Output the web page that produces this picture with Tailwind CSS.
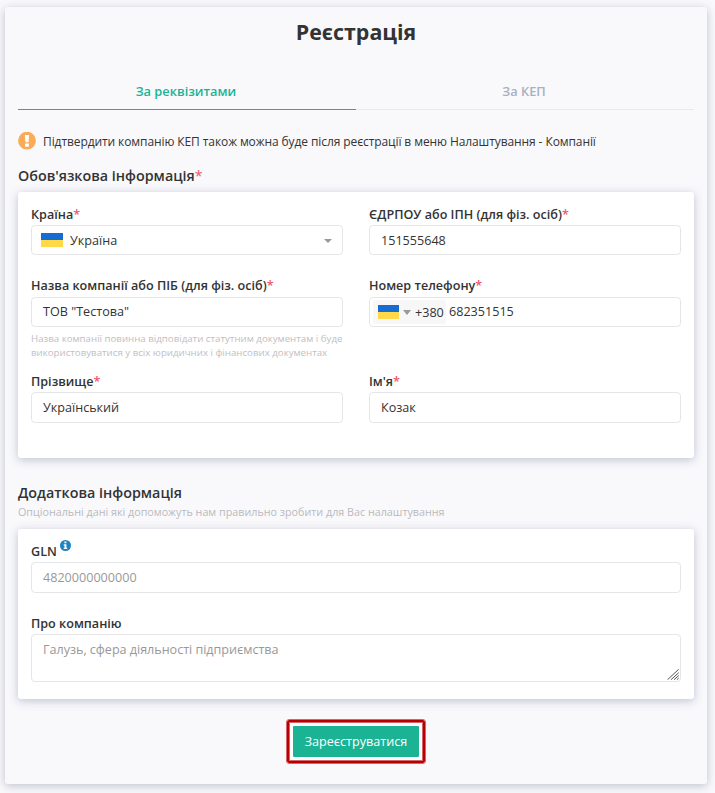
<!DOCTYPE html>
<html lang="uk">
<head>
<meta charset="utf-8">
<title>Реєстрація</title>
<script src="https://cdn.jsdelivr.net/npm/@tailwindcss/browser@4"></script>
</head>
<body class="h-[793px] overflow-hidden bg-[#f9f9fb] pt-[7px] pl-[5px] font-['Open_Sans','Noto_Sans',sans-serif] text-[12.6px] text-[#333]">
<main class="h-[777px] w-[702px] rounded-[3px] bg-[#f9f9fc] px-[13px] shadow-[0_2px_10px_rgba(60,70,110,0.3)]">
  <h1 class="h-[66px] pt-[10px] text-center text-[21.4px] leading-[30px] font-bold">Реєстрація</h1>
  <nav class="flex h-[37px] text-center text-[12.8px] leading-[37px] font-semibold">
    <div class="w-[338px] border-b border-[#1ab394] pr-[2px] text-[#1ab394]">За реквізитами</div>
    <div class="w-[338px] border-b border-[#e7eaec] pr-[2px] text-[#a7b1c2]">За КЕП</div>
  </nav>
  <div class="flex h-[53px] pt-[22px]">
    <svg class="h-[18px] w-[18px] shrink-0" viewBox="0 0 18 18"><circle cx="9" cy="8.7" r="8.9" fill="#f8ac59"/><path d="M6.9 3.1h4.2l-.5 7.1H7.4z" fill="#fff"/><rect x="7.1" y="11.5" width="3.8" height="3.2" rx=".4" fill="#fff"/></svg>
    <p class="ml-[7px] text-[12px] leading-[19px] tracking-[-0.092px] whitespace-nowrap">Підтвердити компанію КЕП також можна буде після реєстрації в меню Налаштування - Компанії</p>
  </div>
  <h2 class="h-[29px] pt-[3px] text-[14.3px] leading-[20px] font-semibold">Обов'язкова інформація<span class="font-normal text-[#ed5565]">*</span></h2>
  <section class="grid h-[266px] grid-cols-[312px_312px] grid-rows-[72px_95px_80px] gap-x-[26px] rounded-[3px] bg-white px-[13px] pt-[13px] shadow-[0_2px_10px_rgba(60,70,110,0.3)]">
    <div>
      <label class="block h-[20px] leading-[20px] font-semibold">Країна<span class="text-[#ed5565]">*</span></label>
      <div class="flex h-[30px] items-center rounded-[4px] border border-[#e5e6e7] pr-[10px] pl-[9px]">
        <svg class="h-[14px] w-[22px]" viewBox="0 0 22 14"><path d="M0 0h22v7H0z" fill="#156dd1"/><path d="M0 7h22v7H0z" fill="#ffd948"/></svg>
        <span class="ml-[7px] flex-1 pt-[2px]">Україна</span>
        <svg class="mt-px h-[4px] w-[8px]" viewBox="0 0 8 4"><path d="M0 0h8L4 4z" fill="#999"/></svg>
      </div>
    </div>
    <div>
      <label class="block h-[20px] leading-[20px] font-semibold">ЄДРПОУ або ІПН (для фіз. осіб)<span class="text-[#ed5565]">*</span></label>
      <div class="flex h-[30px] items-center rounded-[4px] border border-[#e5e6e7] px-[11px] pt-[2px]">151555648</div>
    </div>
    <div>
      <label class="block h-[20px] leading-[18px] font-semibold">Назва компанії або ПІБ (для фіз. осіб)<span class="text-[#ed5565]">*</span></label>
      <div class="flex h-[30px] items-center rounded-[4px] border border-[#e5e6e7] px-[11px] pt-px">ТОВ "Тестова"</div>
      <p class="mt-[5px] text-[9.7px] leading-[14px] whitespace-nowrap text-[#bfc0c2]">Назва компанії повинна відповідати статутним документам і буде<br>використовуватися у всіх юридичних і фінансових документах</p>
    </div>
    <div>
      <label class="block h-[20px] leading-[18px] font-semibold">Номер телефону<span class="text-[#ed5565]">*</span></label>
      <div class="flex h-[30px] items-center rounded-[4px] border border-[#e5e6e7] pl-[3px]">
        <div class="flex h-[24px] w-[73px] items-center rounded-[2px] bg-[#f7f7f7] pl-[5px]">
          <svg class="h-[14px] w-[21px]" viewBox="0 0 21 14"><path d="M0 0h21v7H0z" fill="#156dd1"/><path d="M0 7h21v7H0z" fill="#ffd948"/></svg>
          <svg class="ml-[4px] h-[5px] w-[8px]" viewBox="0 0 8 5"><path d="M0 0h8L4 5z" fill="#999"/></svg>
          <span class="ml-[4px] pt-[3px]">+380</span>
        </div>
        <span class="ml-[3px] pt-px">682351515</span>
      </div>
    </div>
    <div>
      <label class="block h-[20px] leading-[19px] font-semibold">Прізвище<span class="text-[#ed5565]">*</span></label>
      <div class="flex h-[31px] items-center rounded-[4px] border border-[#e5e6e7] px-[11px] pt-px">Український</div>
    </div>
    <div>
      <label class="block h-[20px] leading-[19px] font-semibold">Ім'я<span class="text-[#ed5565]">*</span></label>
      <div class="flex h-[31px] items-center rounded-[4px] border border-[#e5e6e7] px-[11px] pt-px">Козак</div>
    </div>
  </section>
  <h2 class="h-[45px] pt-[25px] text-[14.3px] leading-[20px] font-semibold">Додаткова інформація</h2>
  <p class="h-[26px] text-[10.76px] leading-[18px] text-[#b9babd]">Опціональні дані які допоможуть нам правильно зробити для Вас налаштування</p>
  <section class="h-[170px] rounded-[3px] bg-white px-[13px] pt-[13px] shadow-[0_2px_10px_rgba(60,70,110,0.3)]">
    <div class="flex h-[20px] leading-[19px] font-semibold">GLN
      <svg class="-mt-[2px] ml-[3.5px] h-[11px] w-[11px]" viewBox="0 0 11 11"><circle cx="5.5" cy="5.5" r="5.5" fill="#1c84c6"/><path d="M4.4 1.6h2v1.6h-2zM3.7 4.3h2.7v3.4h.8v1.2H3.7V7.7h.8V5.5h-.8z" fill="#fff"/></svg>
    </div>
    <div class="flex h-[31px] items-center rounded-[4px] border border-[#e5e6e7] px-[11px] pt-px text-[#999]">4820000000000</div>
    <label class="mt-[21px] block h-[20px] leading-[19px] font-semibold">Про компанію</label>
    <div class="relative">
      <textarea class="block h-[48px] w-[650px] resize-none rounded-[4px] border border-[#e5e6e7] px-[11px] py-[6px] leading-[18px] tracking-[-0.03px] placeholder:text-[#999]" placeholder="Галузь, сфера діяльності підприємства"></textarea>
      <svg class="absolute right-[2px] bottom-[2px] h-[11px] w-[12px]" viewBox="0 0 12 11"><path d="M.5 10.7L11.7.3M4 10.7l7.7-7M7 10.7l4.7-4.2M9.8 10.7l1.9-1.6" fill="none" stroke="#555" stroke-width="1"/></svg>
    </div>
  </section>
  <div class="flex justify-center pt-[21px]">
    <div class="rounded-[2px] border-2 border-[#b90000] bg-white p-[4px] shadow-[inset_0_0_0_1px_#d4666b] outline-1 outline-[#d4666b]">
      <button class="block h-[31px] w-[126px] rounded-[1px] bg-[#1ab394] pt-px text-white">Зареєструватися</button>
    </div>
  </div>
</main>
</body>
</html>
